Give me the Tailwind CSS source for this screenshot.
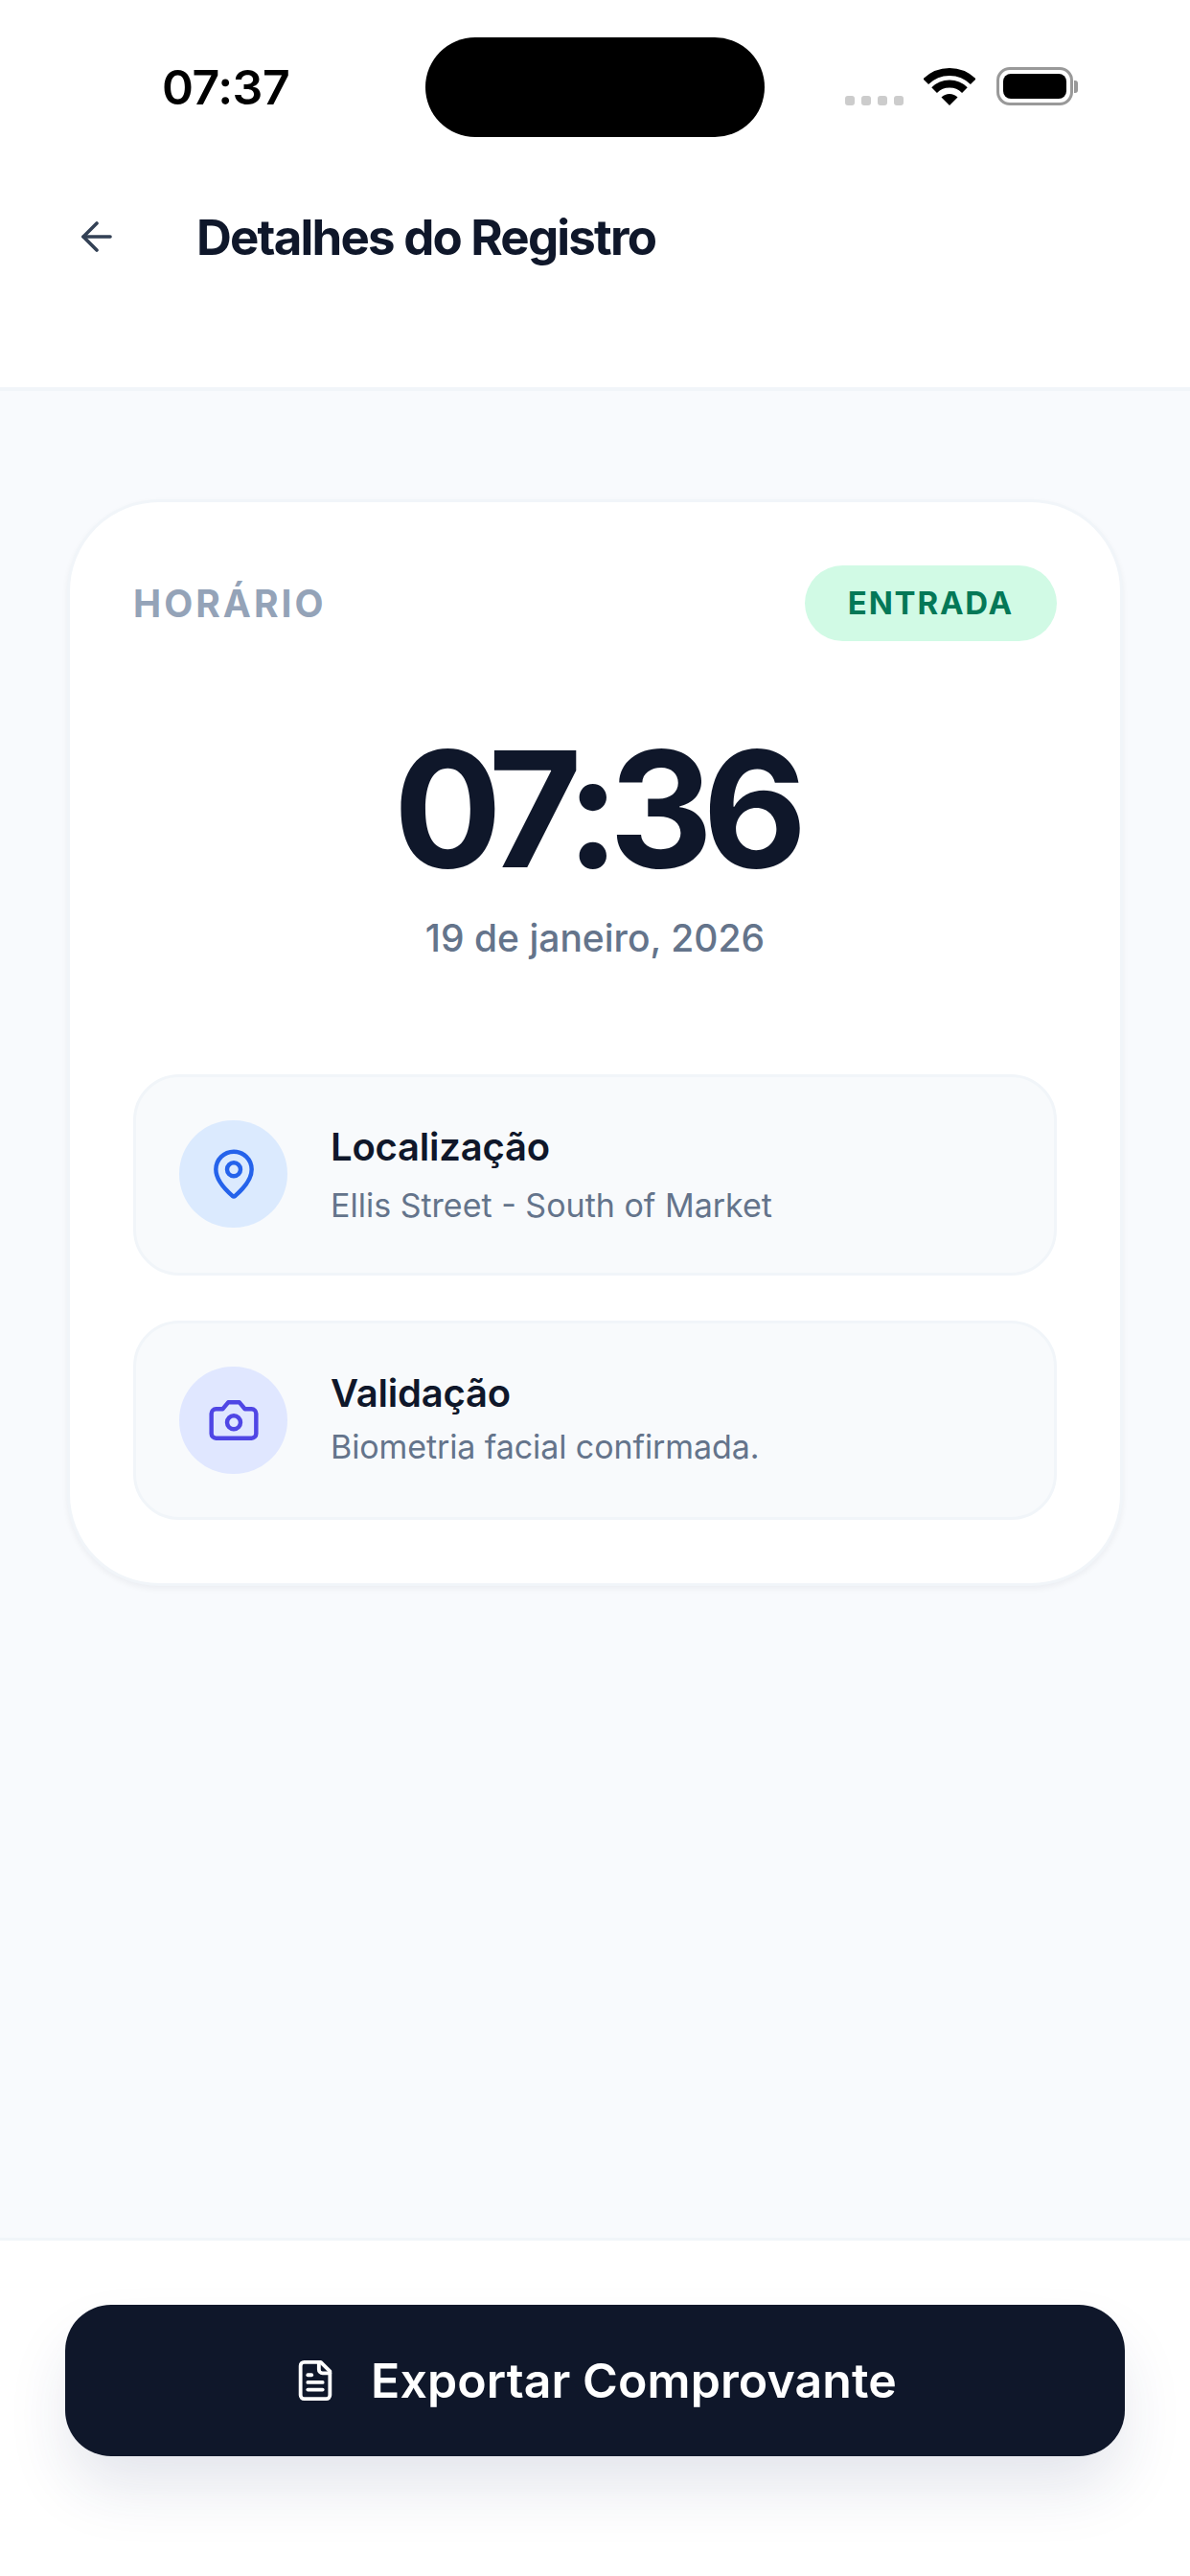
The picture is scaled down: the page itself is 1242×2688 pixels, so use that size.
<!DOCTYPE html>
<html lang="pt-BR">
<head>
    <meta charset="UTF-8">
    <meta name="viewport" content="width=device-width, initial-scale=1.0">
    <title>Detalhes do Registro</title>
    <script src="https://cdn.jsdelivr.net/npm/@tailwindcss/browser@4"></script>
</head>
<body class="bg-white font-['Inter',sans-serif]">
    <div class="w-[1242px] h-[2688px] flex flex-col overflow-hidden">
        <!-- Header -->
        <header class="h-[408px] shrink-0 bg-white border-b-[4px] border-[#f1f5f9] pt-[39px]">
            <!-- Status bar -->
            <div class="flex items-center h-[104px] pl-[169px]">
                <span class="w-[275px] text-[50px] leading-none font-semibold tracking-[-0.5px] text-black">07:37</span>
                <div class="w-[354px] h-[104px] rounded-full bg-black"></div>
                <div class="flex items-end ml-[84px] h-[40px] mb-[2px]">
                    <div class="flex gap-[7px]">
                        <span class="w-[10px] h-[10px] rounded-[3px] bg-[#cccccc]"></span>
                        <span class="w-[10px] h-[10px] rounded-[3px] bg-[#cccccc]"></span>
                        <span class="w-[10px] h-[10px] rounded-[3px] bg-[#cccccc]"></span>
                        <span class="w-[10px] h-[10px] rounded-[3px] bg-[#cccccc]"></span>
                    </div>
                    <svg class="ml-[21px]" width="54" height="40" viewBox="0 0 54 40">
                        <path d="M2.25 15.25A35 35 0 0 1 51.75 15.25" fill="none" stroke="#000" stroke-width="8"/>
                        <path d="M11.1 24.1A22.5 22.5 0 0 1 42.9 24.1" fill="none" stroke="#000" stroke-width="8"/>
                        <path d="M27 40L18.5 31.5A12 12 0 0 1 35.5 31.5Z" fill="#000"/>
                    </svg>
                    <div class="ml-[22px] flex items-center">
                        <div class="w-[80px] h-[40px] rounded-[14px] border-[3px] border-[#999999] p-[4px]">
                            <div class="w-full h-full rounded-[8px] bg-black"></div>
                        </div>
                        <div class="w-[4px] h-[13px] rounded-r-[3px] bg-[#999999] ml-[1px]"></div>
                    </div>
                </div>
            </div>
            <!-- Title row -->
            <div class="flex items-center pl-[77px] mt-[77px] h-[54px]">
                <svg width="48" height="48" viewBox="0 0 24 24" fill="none" stroke="#334155" stroke-width="1.8" stroke-linecap="round" stroke-linejoin="round">
                    <path d="m12 19-7-7 7-7"/>
                    <path d="M19 12H5"/>
                </svg>
                <h1 class="ml-[80px] text-[51px] leading-none font-bold tracking-[-1.8px] text-[#0f172a]">Detalhes do Registro</h1>
            </div>
        </header>

        <!-- Main -->
        <main class="flex-1 bg-[#f8fafd] px-[70px] pt-[113px]">
            <div class="bg-white border-[3px] border-[#f1f5f9] rounded-[96px] p-[66px] shadow-[0_3px_6px_rgba(15,23,42,0.05)]">
                <div class="flex items-center justify-between">
                    <span class="text-[39px] leading-none font-bold tracking-[3px] text-[#94a3b8]">HORÁRIO</span>
                    <span class="h-[79px] px-[45px] flex items-center rounded-full bg-[#d1fae5] text-[33px] font-bold tracking-[1.8px] text-[#047857]">ENTRADA</span>
                </div>
                <div class="mt-[91px] text-center text-[168px] leading-none font-bold tracking-[-11px] text-[#0f172a]">07:36</div>
                <div class="mt-[21px] text-center text-[39px] leading-[60px] font-medium text-[#64748b]">19 de janeiro, 2026</div>

                <div class="mt-[112px] flex flex-col gap-[47px]">
                    <div class="flex items-start gap-[45px] bg-[#f8fafc] border-[3px] border-[#f1f5f9] rounded-[48px] p-[45px]">
                        <div class="w-[113px] h-[112px] shrink-0 rounded-full bg-[#dbeafe] flex items-center justify-center">
                            <svg width="56" height="56" viewBox="0 0 24 24" fill="none" stroke="#2563eb" stroke-width="1.9" stroke-linecap="round" stroke-linejoin="round">
                                <path d="M20 10c0 4.993-5.539 10.193-7.399 11.799a1 1 0 0 1-1.202 0C9.539 20.193 4 14.993 4 10a8 8 0 0 1 16 0"/>
                                <circle cx="12" cy="10" r="3"/>
                            </svg>
                        </div>
                        <div>
                            <div class="text-[40px] leading-[56px] font-semibold tracking-[-0.2px] text-[#0f172a]">Localização</div>
                            <div class="mt-[8px] text-[34px] leading-[50px] text-[#64748b]">Ellis Street - South of Market</div>
                        </div>
                    </div>
                    <div class="flex items-start gap-[45px] bg-[#f8fafc] border-[3px] border-[#f1f5f9] rounded-[48px] p-[45px]">
                        <div class="w-[113px] h-[112px] shrink-0 rounded-full bg-[#e0e7ff] flex items-center justify-center">
                            <svg width="56" height="56" viewBox="0 0 24 24" fill="none" stroke="#4f46e5" stroke-width="1.9" stroke-linecap="round" stroke-linejoin="round">
                                <path d="M14.5 4h-5L7 7H4a2 2 0 0 0-2 2v9a2 2 0 0 0 2 2h16a2 2 0 0 0 2-2V9a2 2 0 0 0-2-2h-3l-2.5-3z"/>
                                <circle cx="12" cy="13" r="3"/>
                            </svg>
                        </div>
                        <div>
                            <div class="text-[40px] leading-[56px] font-semibold tracking-[-0.2px] text-[#0f172a]">Validação</div>
                            <div class="mt-[3px] text-[34px] leading-[50px] tracking-[-0.1px] text-[#64748b]">Biometria facial confirmada.</div>
                        </div>
                    </div>
                </div>
            </div>
        </main>

        <!-- Footer -->
        <footer class="h-[353px] shrink-0 bg-white border-t-[3px] border-[#f1f5f9] px-[68px] pt-[67px]">
            <button class="w-full h-[158px] rounded-[48px] bg-[#0f172a] flex items-center justify-center gap-[35px] shadow-[0_36px_66px_-6px_rgba(30,50,100,0.13)]">
                <svg width="46" height="46" viewBox="0 0 24 24" fill="none" stroke="#ffffff" stroke-width="2" stroke-linecap="round" stroke-linejoin="round">
                    <path d="M15 2H6a2 2 0 0 0-2 2v16a2 2 0 0 0 2 2h12a2 2 0 0 0 2-2V7Z"/>
                    <path d="M14 2v4a2 2 0 0 0 2 2h4"/>
                    <path d="M10 9H8"/>
                    <path d="M16 13H8"/>
                    <path d="M16 17H8"/>
                </svg>
                <span class="text-[50px] leading-none font-semibold tracking-[0.1px] text-white">Exportar Comprovante</span>
            </button>
        </footer>
    </div>
</body>
</html>
